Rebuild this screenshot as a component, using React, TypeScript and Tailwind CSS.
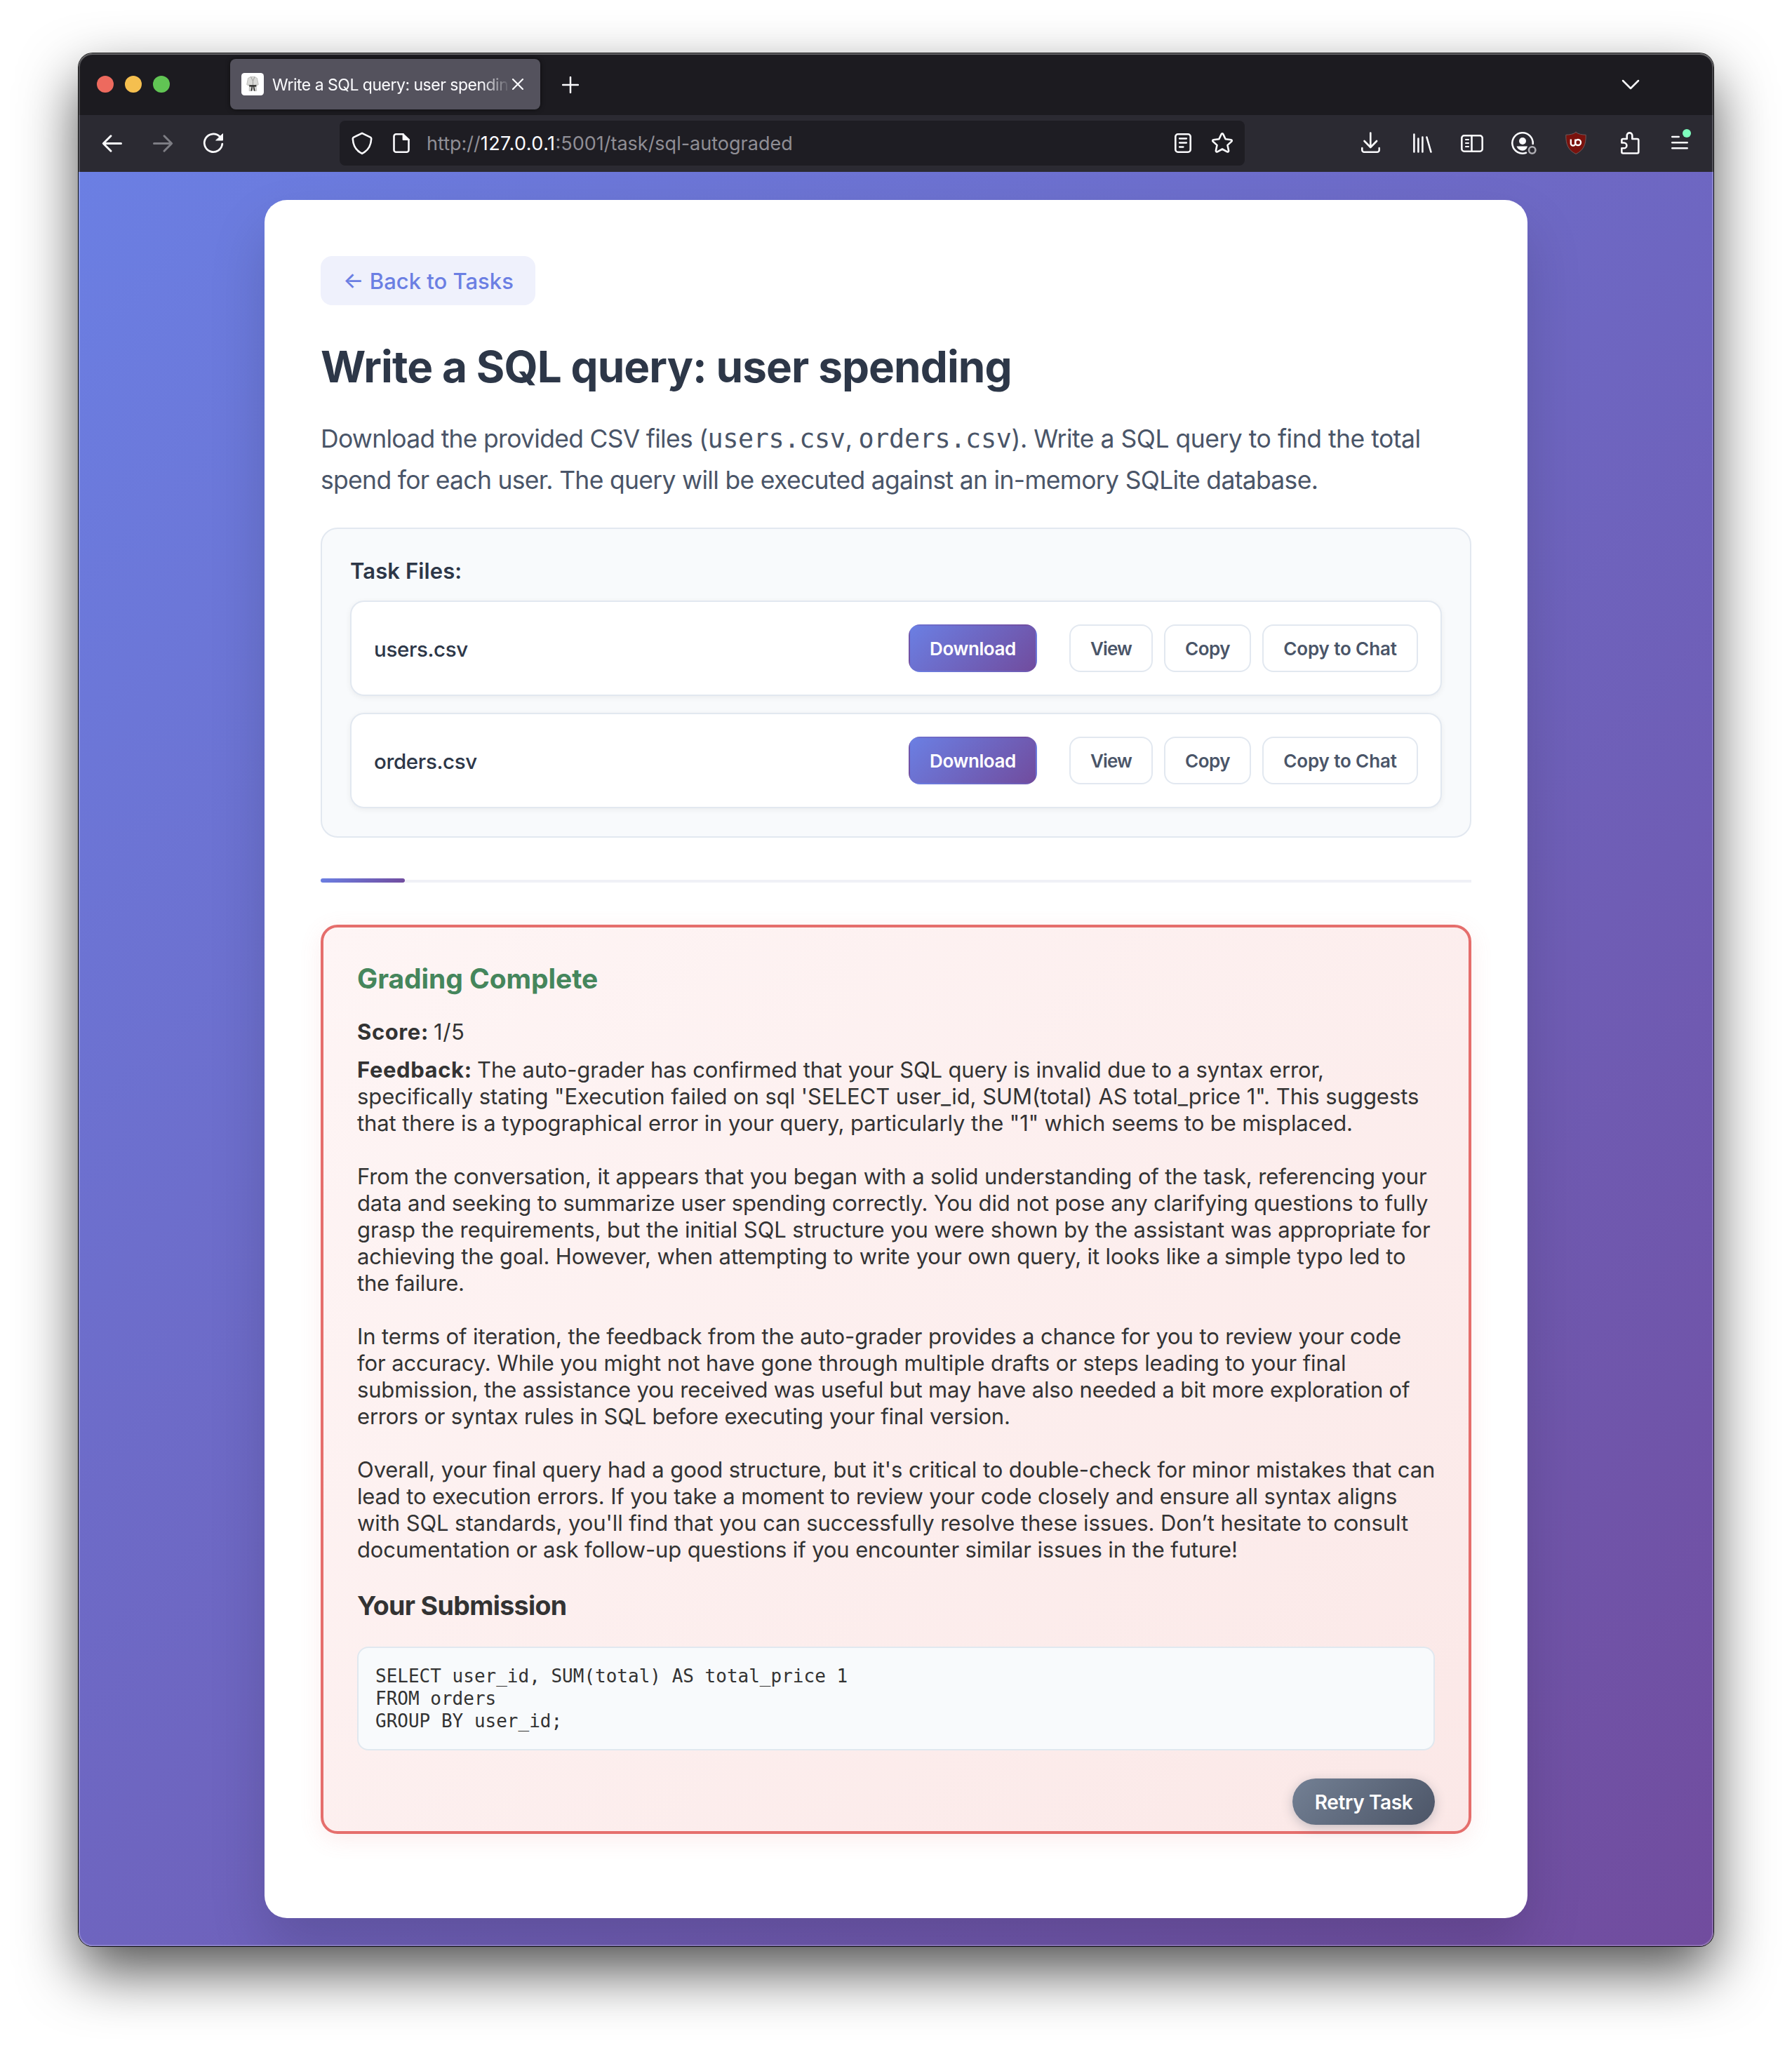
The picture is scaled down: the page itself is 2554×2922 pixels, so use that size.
import type { ReactNode } from "react";

type Line = { text: string; tracking: string };

const openingLines: Line[] = [
  {
    text: "specifically stating \"Execution failed on sql 'SELECT user_id, SUM(total) AS total_price 1\". This suggests",
    tracking: "tracking-[-0.05px]",
  },
  {
    text: 'that there is a typographical error in your query, particularly the "1" which seems to be misplaced.',
    tracking: "tracking-[-0.108px]",
  },
];

const paragraphs: Line[][] = [
  [
    {
      text: "From the conversation, it appears that you began with a solid understanding of the task, referencing your",
      tracking: "tracking-[-0.108px]",
    },
    {
      text: "data and seeking to summarize user spending correctly. You did not pose any clarifying questions to fully",
      tracking: "tracking-[-0.153px]",
    },
    {
      text: "grasp the requirements, but the initial SQL structure you were shown by the assistant was appropriate for",
      tracking: "tracking-[-0.082px]",
    },
    {
      text: "achieving the goal. However, when attempting to write your own query, it looks like a simple typo led to",
      tracking: "tracking-[-0.116px]",
    },
    { text: "the failure.", tracking: "tracking-[-0.2px]" },
  ],
  [
    {
      text: "In terms of iteration, the feedback from the auto-grader provides a chance for you to review your code",
      tracking: "tracking-[-0.117px]",
    },
    {
      text: "for accuracy. While you might not have gone through multiple drafts or steps leading to your final",
      tracking: "tracking-[-0.097px]",
    },
    {
      text: "submission, the assistance you received was useful but may have also needed a bit more exploration of",
      tracking: "tracking-[-0.167px]",
    },
    {
      text: "errors or syntax rules in SQL before executing your final version.",
      tracking: "tracking-[-0.187px]",
    },
  ],
  [
    {
      text: "Overall, your final query had a good structure, but it's critical to double-check for minor mistakes that can",
      tracking: "tracking-[-0.076px]",
    },
    {
      text: "lead to execution errors. If you take a moment to review your code closely and ensure all syntax aligns",
      tracking: "tracking-[-0.139px]",
    },
    {
      text: "with SQL standards, you'll find that you can successfully resolve these issues. Don’t hesitate to consult",
      tracking: "tracking-[-0.088px]",
    },
    {
      text: "documentation or ask follow-up questions if you encounter similar issues in the future!",
      tracking: "tracking-[-0.122px]",
    },
  ],
];

const submission = `SELECT user_id, SUM(total) AS total_price 1
FROM orders
GROUP BY user_id;`;

function Icon({ children, className = "" }: { children: ReactNode; className?: string }) {
  return (
    <svg
      viewBox="0 0 32 32"
      className={`size-8 shrink-0 overflow-visible ${className}`}
      fill="none"
      stroke="#fbfbfe"
      strokeWidth="2.6"
      strokeLinecap="round"
      strokeLinejoin="round"
    >
      {children}
    </svg>
  );
}

function TabStrip() {
  return (
    <div className="flex h-[88px] items-center bg-[#1c1b20] pl-[26px] pr-[104px]">
      <div className="flex gap-4">
        <span className="size-6 rounded-full bg-[#ed6a5e]" />
        <span className="size-6 rounded-full bg-[#f5bf4f]" />
        <span className="size-6 rounded-full bg-[#61c554]" />
      </div>
      <div className="ml-[86px] flex h-[72px] w-[442px] items-center rounded-lg bg-[#54525d] pl-4 pr-6 shadow-[0_0_6px_rgba(0,0,0,0.6)]">
        <svg viewBox="0 0 32 32" className="size-8 shrink-0">
          <rect width="32" height="32" rx="4.5" fill="#fff" />
          <path d="M13 5.5h6l3.500 2 1.800 9-2.500 1.500-.8-1.500v2h-10v-2l-.8 1.500-2.500-1.500 1.800-9z" fill="#d9d9d6" stroke="#a3a3a0" strokeWidth=".6" />
          <path d="M13.500 5.500l3 6 2.500-6M16.500 11.500v6" fill="none" stroke="#8d8d8a" strokeWidth=".8" />
          <path d="M11.500 18.500h9.500l.8 7h-3.600l-1.700-5-1.700 5h-3.800z" fill="#d2d2cf" stroke="#a3a3a0" strokeWidth=".5" />
          <path d="M11.300 17.300h10v2.200h-10zM14.700 19h1.200l-.5 6.500h-1.900zM17 19h1.200l1.400 6.500h-1.900z" fill="#262624" />
        </svg>
        <div className="ml-3 w-[336px] overflow-hidden whitespace-nowrap pt-[2px] text-[23px] leading-8 tracking-[-0.5px] text-[#fbfbfe] [mask-image:linear-gradient(to_right,black_89%,transparent_101%)]">
          Write a SQL query: user spending
        </div>
        <svg viewBox="0 0 16 16" className="ml-[6px] size-4 shrink-0" stroke="#fbfbfe" strokeWidth="2.200" strokeLinecap="round">
          <path d="M1 1l14 14M15 1L1 15" />
        </svg>
      </div>
      <svg viewBox="0 0 24 24" className="ml-[31px] mt-[2px] size-6" stroke="#fbfbfe" strokeWidth="2.500" strokeLinecap="round">
        <path d="M12 1v22M1 12h22" />
      </svg>
      <svg viewBox="0 0 28 16" className="ml-auto h-4 w-7" fill="none" stroke="#fbfbfe" strokeWidth="2.500" strokeLinecap="round" strokeLinejoin="round">
        <path d="M3 3l11 11L25 3" />
      </svg>
    </div>
  );
}

function Toolbar() {
  return (
    <div className="flex h-[81px] items-start bg-[#2b2a32] pl-8 pt-2">
      <div className="flex h-16 items-center gap-10">
        <Icon>
          <path d="M14 5.800L3.300 16.500 14 27.200M3.500 16.500h25" strokeWidth="3" />
        </Icon>
        <Icon className="opacity-40">
          <path d="M18 5.800l10.700 10.700L18 27.200M28.500 16.500h-25" strokeWidth="3" />
        </Icon>
        <Icon>
          <path d="M28.800 17.200A12.800 12.800 0 1 1 25 6.600" strokeWidth="2.800" />
          <path d="M29.500 3v9h-9.500z" fill="#fbfbfe" stroke="#fbfbfe" strokeWidth="1" />
        </Icon>
      </div>
      <div className="ml-[164px] flex h-16 w-[1290px] items-center rounded-lg bg-[#1e1d23] px-4">
        <Icon>
          <path d="M16 1.800L27.800 7.600C29 8.200 29.300 8.800 29.200 10c-.5 8.500-4 15-9.800 18.900l-3.400 2-3.400-2C6.800 25 3.300 18.500 2.800 10c-.1-1.200.2-1.800 1.400-2.400z" />
        </Icon>
        <Icon className="ml-6">
          <path d="M18.500 3.200H8.500a3 3 0 0 0-3 3v19.600a3 3 0 0 0 3 3h15a3 3 0 0 0 3-3V11" />
          <path d="M18.500 3v8h8.300z" fill="#fbfbfe" stroke="#fbfbfe" strokeWidth="1.800" />
        </Icon>
        <div className="ml-5 whitespace-pre pt-[2px] text-[27px] leading-8 text-[#8f8e95]">
          http://<span className="tracking-[0.45px] text-[#fbfbfe]">127.0.0.1</span>:5001/task/sql-autograded
        </div>
        <Icon className="ml-auto">
          <rect x="5.300" y="3.300" width="21.400" height="25.400" rx="3.500" />
          <path d="M11 9.500h10M11 15.500h10M11 21.500h5.500" strokeWidth="2.300" />
        </Icon>
        <Icon className="ml-6">
          <path d="M14.700 3.200c.5-1.100 2.100-1.100 2.600 0l3.300 7.100 7.900.9c1.200.1 1.700 1.600.8 2.400l-5.800 5.300 1.600 7.900c.2 1.200-1 2.100-2.100 1.500L16 24.500l-7 3.800c-1.100.6-2.300-.3-2.100-1.500l1.600-7.900-5.800-5.300c-.9-.8-.4-2.300.8-2.400l7.900-.9z" />
        </Icon>
      </div>
      <div className="ml-[164px] flex h-16 items-center">
        <Icon>
          <path d="M15.300 1.500v20M6.500 13l8.800 9 8.800-9M3.300 23v2.700a3 3 0 0 0 3 3h18.400a3 3 0 0 0 3-3V23" />
        </Icon>
        <Icon className="ml-10">
          <path d="M5.400 3.500v25M11.400 9.500v19M17.400 7.500v21M23.400 7.500l6 21" />
        </Icon>
        <Icon className="ml-10">
          <rect x="1.300" y="5.300" width="29.400" height="22.400" rx="3.500" />
          <path d="M15.500 5.500v22" />
          <path d="M7 11h4M7 16h4M7 21h4" strokeWidth="2.200" />
        </Icon>
        <Icon className="ml-10">
          <path d="M30.700 17A14.700 14.700 0 1 0 21 29.800" />
          <circle cx="16" cy="13" r="5" fill="#fbfbfe" stroke="none" />
          <path d="M7.500 20.500h15.500c-1 4-3.500 6-7 6.300-3.800-.2-7-2.300-8.500-6.300z" fill="#fbfbfe" stroke="none" />
          <circle cx="29.700" cy="26" r="4.700" stroke="#aeadb3" strokeWidth="2.600" />
        </Icon>
        <Icon className="ml-11">
          <path d="M16 .5c4 3 8.500 3.500 14.200 3.700C30.500 18 27 26 16 31.500 5 26 1.500 18 1.800 4.200 7.500 4 12 3.500 16 .5z" fill="#7a120d" stroke="#6d5a5c" strokeWidth="1" />
          <path d="M8.800 10.500v6a3.200 3.200 0 0 0 6.400 0v-6" stroke="#fff" strokeWidth="2.300" strokeLinecap="butt" />
          <circle cx="19" cy="15" r="4" stroke="#fff" strokeWidth="2.300" />
        </Icon>
        <Icon className="ml-11">
          <path d="M5.300 15.500V12a2 2 0 0 1 2-2h5.400V5.200a3.800 3.800 0 0 1 7.600 0V10h7a2 2 0 0 1 2 2v16.500a2 2 0 0 1-2 2h-20a2 2 0 0 1-2-2v-5.200h3.200a3.900 3.900 0 0 0 0-7.800z" />
        </Icon>
        <Icon className="ml-10">
          <path d="M5.200 7h9.500M5.200 15.300h21.500M5.200 23.300h21.500" strokeWidth="2.500" />
          <circle cx="26" cy="2" r="6" fill="#7effbe" stroke="none" />
        </Icon>
      </div>
    </div>
  );
}

function FileRow({ name }: { name: string }) {
  return (
    <div className="flex h-[136px] items-center rounded-[20px] border-2 border-[#e2e8f0] bg-white px-8 text-[26px] font-semibold leading-8 shadow-[0_2px_8px_rgba(0,0,0,0.06)]">
      <span className="mr-auto pt-[2px] text-[29.5px] font-medium tracking-[-0.35px] text-[#2d3748]">{name}</span>
      <button className="mr-[46px] flex h-[68px] w-[183px] items-center justify-center rounded-2xl border-2 border-transparent bg-[linear-gradient(135deg,#6b7fe3,#714c9e)] pt-[2px] tracking-[-0.4px] text-white">
        Download
      </button>
      <div className="flex gap-4 text-[#4a5568]">
        <button className="flex h-[68px] w-[119px] items-center justify-center rounded-2xl border-2 border-[#e2e8f0] bg-white pt-[2px] tracking-[-0.9px]">
          View
        </button>
        <button className="flex h-[68px] w-[124px] items-center justify-center rounded-2xl border-2 border-[#e2e8f0] bg-white pt-[2px] tracking-[-0.5px]">
          Copy
        </button>
        <button className="flex h-[68px] w-[222px] items-center justify-center rounded-2xl border-2 border-[#e2e8f0] bg-white pt-[2px] tracking-[-0.12px]">
          Copy to Chat
        </button>
      </div>
    </div>
  );
}

function Feedback() {
  return (
    <section className="mt-[60px] h-[1296px] rounded-3xl border-4 border-[#e56e6c] bg-[linear-gradient(135deg,#fef5f5,#fbe8e7)] px-12 pt-[49px] text-[31px] leading-[38px] text-[#333] shadow-[0_8px_32px_rgba(229,110,108,0.12)]">
      <h2 className="text-[39px] font-bold leading-[48px] tracking-[-0.08px] text-[#45865c]">Grading Complete</h2>
      <p className="mt-[33px] whitespace-nowrap">
        <strong className="inline-block w-[109px] font-bold tracking-[0.6px]">Score:</strong>
        <span className="tracking-[0.6px]">1/5</span>
      </p>
      <div className="mt-4 whitespace-nowrap">
        <p className="tracking-[-0.132px]">
          <strong className="inline-block w-[171px] font-bold tracking-[0.6px]">Feedback:</strong>
          The auto-grader has confirmed that your SQL query is invalid due to a syntax error,
        </p>
        {openingLines.map((line) => (
          <p key={line.text} className={line.tracking}>
            {line.text}
          </p>
        ))}
        {paragraphs.map((lines) => (
          <div key={lines[0].text} className="mt-[38px]">
            {lines.map((line) => (
              <p key={line.text} className={line.tracking}>
                {line.text}
              </p>
            ))}
          </div>
        ))}
      </div>
      <h3 className="mt-[38px] text-[37.5px] font-bold leading-[46px] tracking-[-0.65px]">Your Submission</h3>
      <pre className="mt-[35px] h-[148px] rounded-2xl border-2 border-[#e0e8ef] bg-[#f8fafc] p-6 font-['DejaVu_Sans_Mono',monospace] text-[26px] leading-8">
        {submission}
      </pre>
      <div className="mt-10 flex justify-end">
        <button className="flex h-[66px] w-[203px] items-center justify-center rounded-full bg-[linear-gradient(135deg,#738094,#4c5567)] pt-[2px] text-[28px] font-semibold leading-8 tracking-[-0.37px] text-white shadow-[0_4px_16px_rgba(74,85,104,0.3)]">
          Retry Task
        </button>
      </div>
    </section>
  );
}

function TaskPage() {
  return (
    <div className="flex h-[2529px] justify-center bg-[linear-gradient(135deg,#6b7fe3,#714c9e)] py-10">
      <main className="w-[1800px] rounded-[32px] bg-white p-20 shadow-[0_40px_80px_rgba(0,0,0,0.15)]">
        <a className="flex h-[70px] w-[306px] items-center rounded-2xl bg-[#eff1fc] pl-8 pt-[2px] text-[31px] font-medium leading-9 text-[#6b7fe3]">
          ← Back to Tasks
        </a>
        <h1 className="mt-[52px] whitespace-nowrap text-[62px] font-bold leading-[72px] tracking-[-0.926px] text-[#2d3748]">
          Write a SQL query: user spending
        </h1>
        <div className="mt-[37px] whitespace-pre text-[35.5px] leading-[59px] tracking-[-0.69px] text-[#4a5568]">
          <p className="h-[59px]">
            <span className="tracking-[-0.72px]">Download the provided CSV files (</span>
            <code className="font-['DejaVu_Sans_Mono',monospace] text-[36.8px] tracking-[-0.35px]">users.csv</code>
            {", "}
            <code className="font-['DejaVu_Sans_Mono',monospace] text-[36.8px] tracking-[-0.35px]">orders.csv</code>
            <span className="tracking-[-0.49px]">{"). Write a SQL query to find the total"}</span>
          </p>
          <p className="h-[59px]">
            spend for each user. The query will be executed against an in-memory SQLite database.
          </p>
        </div>
        <section className="mt-[38px] h-[442px] rounded-3xl border-2 border-[#e2e8f0] bg-[#f8fafc] px-10 pt-10">
          <h2 className="h-[62px] text-[31px] font-semibold leading-[40px] tracking-[0.1px] text-[#2d3748]">Task Files:</h2>
          <div className="flex flex-col gap-6">
            <FileRow name="users.csv" />
            <FileRow name="orders.csv" />
          </div>
        </section>
        <div className="mt-[58px] flex h-[6px] items-end">
          <div className="h-[6px] w-[120px] rounded-[3px] bg-[linear-gradient(135deg,#6b7fe3,#714c9e)]" />
          <div className="h-1 flex-1 bg-[#f0f1f6]" />
        </div>
        <Feedback />
      </main>
    </div>
  );
}

export default function App() {
  return (
    <div className="h-[2922px] w-[2554px] overflow-hidden bg-white pl-[112px] pt-[76px] font-[Inter,'Liberation_Sans',sans-serif]">
      <div className="relative h-[2698px] w-[2330px] overflow-hidden rounded-[20px] shadow-[0_0_0_1px_rgba(0,0,0,0.9),0_36px_82px_rgba(0,0,0,0.68)]">
        <TabStrip />
        <Toolbar />
        <TaskPage />
        <div className="pointer-events-none absolute inset-0 rounded-[20px] shadow-[inset_0_2px_0_rgba(255,255,255,0.16),inset_0_0_0_2px_rgba(255,255,255,0.2)]" />
      </div>
    </div>
  );
}
